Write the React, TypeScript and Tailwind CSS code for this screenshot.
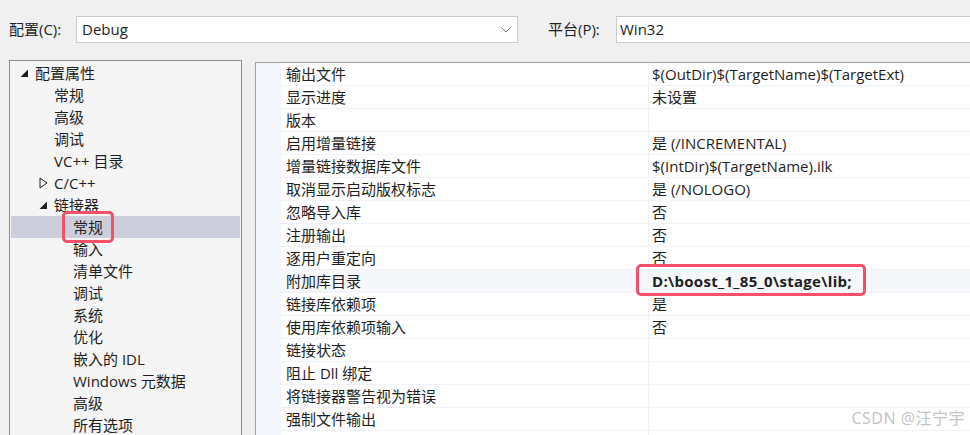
import React from "react";

const font = { fontFamily: '"Segoe UI", "Open Sans", "Noto Sans CJK SC", sans-serif' };

type TreeItem = { label: string; level: number; icon?: "open" | "closed"; selected?: boolean };

const tree: TreeItem[] = [
  { label: "配置属性", level: 0, icon: "open" },
  { label: "常规", level: 1 },
  { label: "高级", level: 1 },
  { label: "调试", level: 1 },
  { label: "VC++ 目录", level: 1 },
  { label: "C/C++", level: 1, icon: "closed" },
  { label: "链接器", level: 1, icon: "open" },
  { label: "常规", level: 2, selected: true },
  { label: "输入", level: 2 },
  { label: "清单文件", level: 2 },
  { label: "调试", level: 2 },
  { label: "系统", level: 2 },
  { label: "优化", level: 2 },
  { label: "嵌入的 IDL", level: 2 },
  { label: "Windows 元数据", level: 2 },
  { label: "高级", level: 2 },
  { label: "所有选项", level: 2 },
];

const rows: { name: string; value: string; bold?: boolean; selected?: boolean }[] = [
  { name: "输出文件", value: "$(OutDir)$(TargetName)$(TargetExt)" },
  { name: "显示进度", value: "未设置" },
  { name: "版本", value: "" },
  { name: "启用增量链接", value: "是 (/INCREMENTAL)" },
  { name: "增量链接数据库文件", value: "$(IntDir)$(TargetName).ilk" },
  { name: "取消显示启动版权标志", value: "是 (/NOLOGO)" },
  { name: "忽略导入库", value: "否" },
  { name: "注册输出", value: "否" },
  { name: "逐用户重定向", value: "否" },
  { name: "附加库目录", value: "D:\\boost_1_85_0\\stage\\lib;", bold: true, selected: true },
  { name: "链接库依赖项", value: "是" },
  { name: "使用库依赖项输入", value: "否" },
  { name: "链接状态", value: "" },
  { name: "阻止 Dll 绑定", value: "" },
  { name: "将链接器警告视为错误", value: "" },
  { name: "强制文件输出", value: "" },
  { name: "", value: "" },
];

function OpenTri() {
  return (
    <svg width="9" height="9" viewBox="0 0 9 9">
      <polygon points="8,0.5 8,8 0.5,8" fill="#1e1e1e" />
    </svg>
  );
}
function ClosedTri() {
  return (
    <svg width="9" height="12" viewBox="0 0 9 12">
      <polygon points="1,1 8,6 1,11" fill="none" stroke="#1e1e1e" strokeWidth="1" />
    </svg>
  );
}

export default function App() {
  return (
    <div
      className="relative w-[970px] h-[435px] overflow-hidden bg-[#f0f0f0] text-[15px] text-[#1e1e1e]"
      style={font}
    >
      {/* top bar */}
      <div className="flex items-center pt-[16px] h-[43px] pl-[9px]">
        <span className="shrink-0 w-[67px] leading-none">配置(C):</span>
        <div className="shrink-0 flex items-center justify-between w-[442px] h-[27px] bg-white border border-[#cccccc] pl-[5px] pr-[6px]">
          <span>Debug</span>
          <svg width="10" height="6" viewBox="0 0 10 6">
            <polyline points="0.5,0.5 5,5 9.5,0.5" fill="none" stroke="#707070" strokeWidth="1" />
          </svg>
        </div>
        <span className="shrink-0 ml-[30px] w-[68px] leading-none">平台(P):</span>
        <div className="shrink-0 flex items-center w-[400px] h-[27px] bg-white border border-[#cccccc] pl-[3px]">
          <span>Win32</span>
        </div>
      </div>

      {/* main */}
      <div className="flex mt-[17px] pl-[9px]">
        {/* tree */}
        <div className="shrink-0 w-[233px] h-[400px] border border-[#8c8c8c] bg-[#f5f5f5] pt-[1px] pl-[1px] pr-[1px]">
          {tree.map((t, i) => (
            <div
              key={i}
              className={`flex items-center h-[22px] ${t.selected ? "bg-[#cccedb]" : ""}`}
            >
              <div
                className={`flex items-center justify-end shrink-0 pr-[6px] ${
                  t.level === 0 ? "w-[24px]" : t.level === 1 ? "w-[43px]" : "w-[62px]"
                }`}
              >
                {t.icon === "open" && <OpenTri />}
                {t.icon === "closed" && <ClosedTri />}
              </div>
              <span className="whitespace-nowrap leading-none">{t.label}</span>
            </div>
          ))}
        </div>

        {/* grid */}
        <div className="ml-[13px] mt-[2px] flex-1 h-[400px] border-l border-t border-[#a0a0a0] bg-white flex">
          <div className="w-[25px] shrink-0 bg-[#f3f7fc]" />
          <div className="flex-1">
            {rows.map((r, i) => (
              <div
                key={i}
                className={`flex h-[23px] border-b border-[#f0f2f7] ${r.selected ? "bg-[#f5f7fb]" : ""}`}
              >
                <div className="w-[368px] shrink-0 flex items-center pl-[5px] border-r border-[#f0f2f7]">
                  <span className="whitespace-nowrap leading-none">{r.name}</span>
                </div>
                <div className="flex-1 flex items-center pl-[3px]">
                  <span
                    className={`whitespace-nowrap leading-none ${
                      r.bold ? "font-bold tracking-[0.3px]" : ""
                    }`}
                  >
                    {r.value}
                  </span>
                </div>
              </div>
            ))}
          </div>
        </div>
      </div>

      {/* annotations */}
      <div className="absolute left-[62px] top-[211px] w-[52px] h-[32px] rounded-[5px] border-[3px] border-[#f5506a]" />
      <div className="absolute left-[636px] top-[264px] w-[230px] h-[32px] rounded-[5px] border-[3px] border-[#f5506a]" />

      {/* watermark */}
      <div className="absolute right-[5px] top-[406px] text-[16px] text-[#c4c4c4] tracking-[0.5px]">
        CSDN @汪宁宇
      </div>
    </div>
  );
}
